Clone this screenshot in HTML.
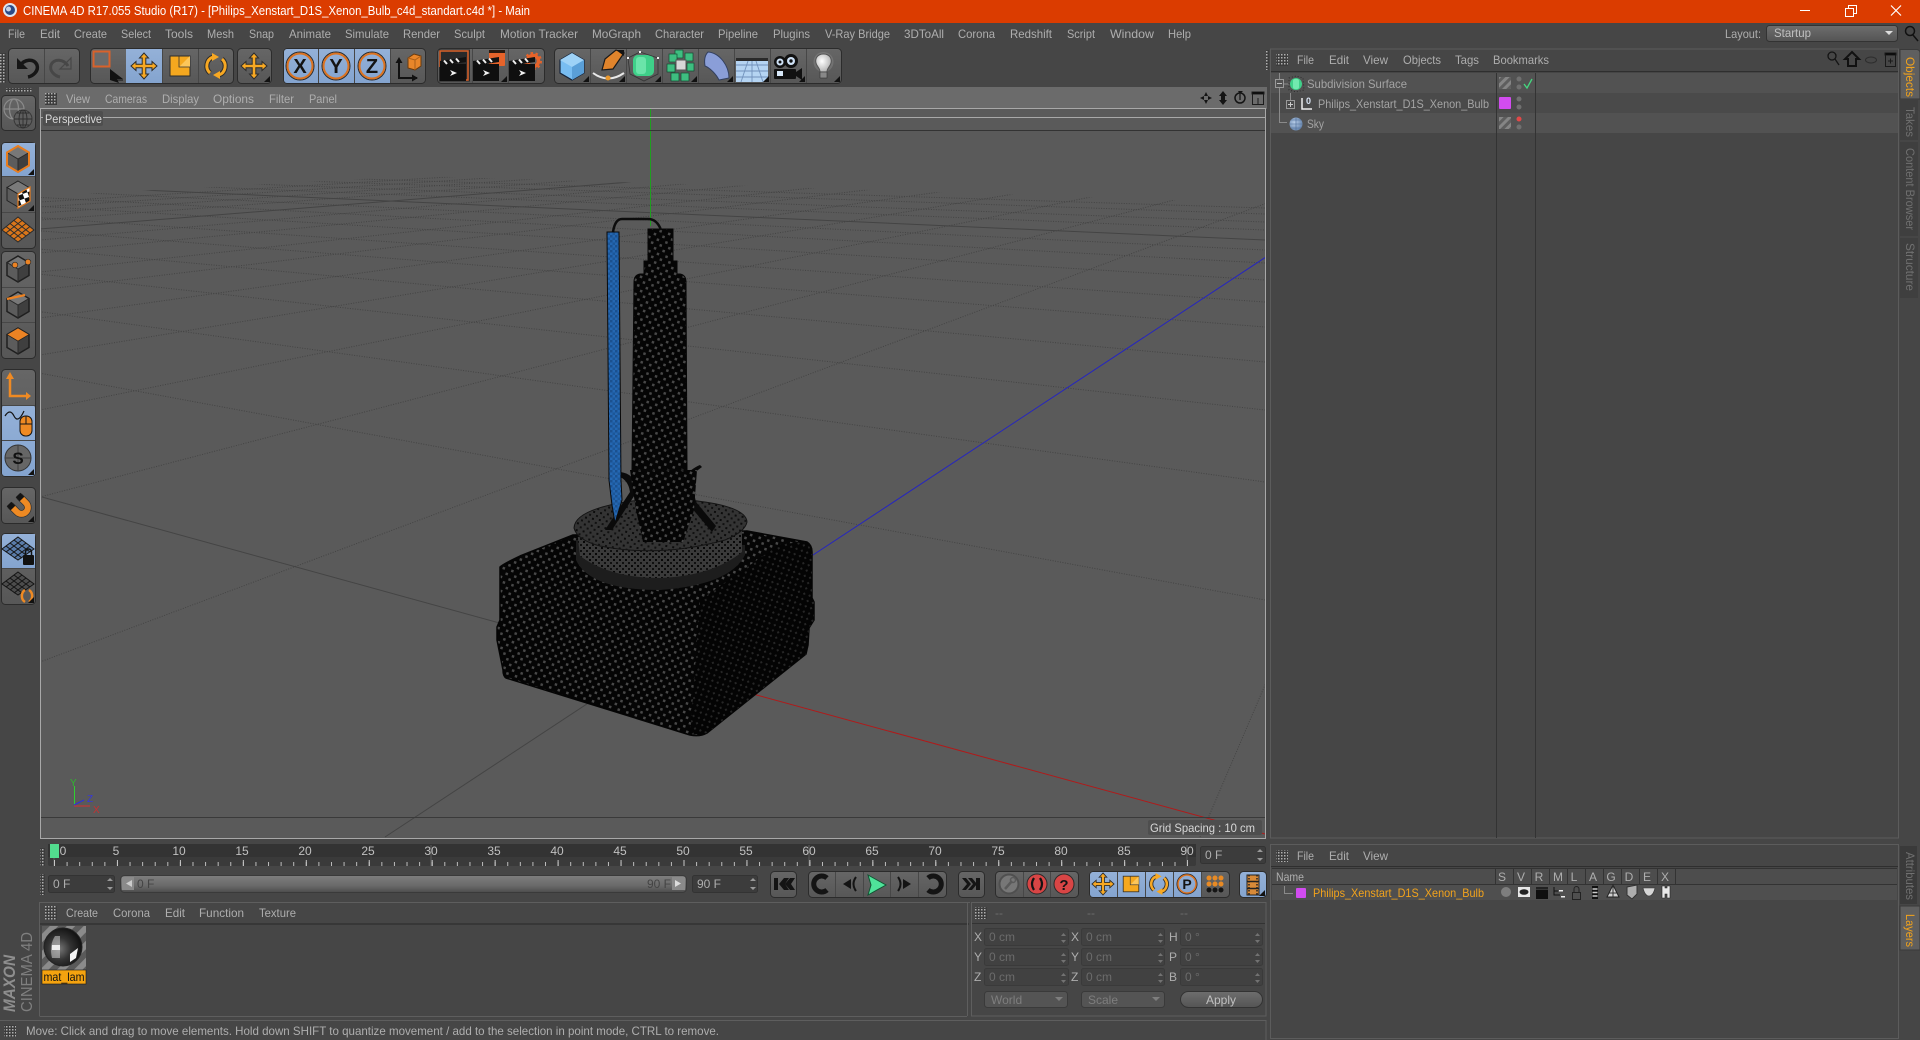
<!DOCTYPE html>
<html><head><meta charset="utf-8"><title>CINEMA 4D</title>
<style>
html,body{margin:0;padding:0;background:#464646;width:1920px;height:1040px;overflow:hidden}
svg{display:block}
text{font-family:"Liberation Sans",sans-serif;font-size:12px;fill:#aeaeae;white-space:pre}
.d,.d text{fill:#6c6c6c}.o{fill:#f2a31c}.w{fill:#d8d8d8}.h,.h text{fill:#c0c0c0}
</style></head><body>
<svg width="1920" height="1040" viewBox="0 0 1920 1040" xmlns="http://www.w3.org/2000/svg">
<defs>
<pattern id="grip" width="3" height="3" patternUnits="userSpaceOnUse"><rect width="3" height="3" fill="#3c3c3c"/><rect width="1.5" height="1.5" fill="#b0b0b0"/></pattern>
<linearGradient id="btn" x1="0" y1="0" x2="0" y2="1"><stop offset="0" stop-color="#666"/><stop offset="1" stop-color="#575757"/></linearGradient>
<linearGradient id="blu" x1="0" y1="0" x2="0" y2="1"><stop offset="0" stop-color="#94b1d8"/><stop offset="1" stop-color="#84a4cf"/></linearGradient>
<linearGradient id="sl" x1="0" y1="0" x2="0" y2="1"><stop offset="0" stop-color="#7e7e7e"/><stop offset=".6" stop-color="#6a6a6a"/><stop offset="1" stop-color="#4c4c4c"/></linearGradient>
<linearGradient id="dd" x1="0" y1="0" x2="0" y2="1"><stop offset="0" stop-color="#6e6e6e"/><stop offset="1" stop-color="#545454"/></linearGradient>
<pattern id="d1" width="9" height="9" patternUnits="userSpaceOnUse" patternTransform="rotate(18)"><rect width="9" height="9" fill="#050505"/><rect x="1" y="1" width="2.500" height="2.500" fill="#484848"/><rect x="5.500" y="5.500" width="2.500" height="2.500" fill="#484848"/></pattern>
<pattern id="d2" width="8" height="8" patternUnits="userSpaceOnUse" patternTransform="rotate(-25)"><rect width="8" height="8" fill="#040404"/><rect x="1" y="1" width="2" height="2" fill="#262626"/><rect x="5" y="5" width="2" height="2" fill="#262626"/></pattern>
<pattern id="d3" width="6" height="6" patternUnits="userSpaceOnUse"><rect width="6" height="6" fill="#3a3a3a"/><rect x="1" y="1" width="2" height="2" fill="#080808"/><rect x="4" y="4" width="2" height="2" fill="#101010"/></pattern>
<pattern id="d4" width="7" height="7" patternUnits="userSpaceOnUse" patternTransform="rotate(10)"><rect width="7" height="7" fill="#333"/><rect x="1" y="1" width="2" height="2" fill="#0c0c0c"/><rect x="4.500" y="4.500" width="2" height="2" fill="#111"/></pattern>
<pattern id="bl" width="5" height="5" patternUnits="userSpaceOnUse"><rect width="5" height="5" fill="#2467b2"/><rect width="2.500" height="2.500" fill="#1b5190"/><rect x="2.500" y="2.500" width="2.500" height="2.500" fill="#1d5798"/></pattern>
<pattern id="hat" width="6" height="6" patternUnits="userSpaceOnUse" patternTransform="rotate(-45)"><rect width="6" height="6" fill="#858585"/><rect width="6" height="3" fill="#5e5e5e"/></pattern>
<pattern id="chk" width="10" height="10" patternUnits="userSpaceOnUse" patternTransform="rotate(-20)"><rect width="10" height="10" fill="#fff"/><rect width="5" height="5" fill="#111"/><rect x="5" y="5" width="5" height="5" fill="#111"/></pattern>
<pattern id="stripe" width="12" height="12" patternUnits="userSpaceOnUse" patternTransform="rotate(45)"><rect width="12" height="12" fill="#8b8b8b"/><rect width="6" height="12" fill="#5a5a5a"/></pattern>
<radialGradient id="chrome" cx=".4" cy=".55" r=".6"><stop offset="0" stop-color="#777"/><stop offset=".5" stop-color="#333"/><stop offset="1" stop-color="#111"/></radialGradient>
<radialGradient id="sky" cx=".4" cy=".4" r=".7"><stop offset="0" stop-color="#b7cde8"/><stop offset="1" stop-color="#5e7da6"/></radialGradient>
<radialGradient id="glb" cx=".4" cy=".4" r=".7"><stop offset="0" stop-color="#ffffff"/><stop offset="1" stop-color="#a8a8a8"/></radialGradient>
<clipPath id="vp"><rect x="41" y="109" width="1224" height="729"/></clipPath>
<clipPath id="gr"><polygon points="41,196 230,186 418,176 750,186 1266,203 1266,838 41,838"/></clipPath>
<path id="mv" d="M0-13L4.500-8H1.800V-1.800H8V-4.500L13 0L8 4.500V1.800H1.800V8H4.500L0 13L-4.500 8H-1.800V1.800H-8V4.500L-13 0L-8-4.500V-1.800H-1.800V-8H-4.500Z" fill="#f7a823" stroke="#2c2c2c" stroke-width="1"/>
<g id="sc"><rect x="-10" y="-10" width="20" height="20" fill="#f5a81f" stroke="#2c2c2c"/><path d="M-1 1L10-10V1Z" fill="#fcc65a"/><path d="M-1-10V1H10" fill="none" stroke="#333" stroke-width=".8"/></g>
<g id="rt"><path d="M-3-9A9.500 9.500 0 0 0-6 7" fill="none" stroke="#2c2c2c" stroke-width="5"/><path d="M3 9A9.500 9.500 0 0 0 6-7" fill="none" stroke="#2c2c2c" stroke-width="5"/><path d="M-3-9A9.500 9.500 0 0 0-6 7" fill="none" stroke="#f7a823" stroke-width="3"/><path d="M3 9A9.500 9.500 0 0 0 6-7" fill="none" stroke="#f7a823" stroke-width="3"/><path d="M-4-13L3-9L-4-5Z" fill="#f7a823"/><path d="M4 13L-3 9L4 5Z" fill="#f7a823"/></g>
<g id="cb"><polygon points="0,-13 11,-6.500 0,0 -11,-6.500" fill="#787878"/><polygon points="-11,-6.500 0,0 0,13 -11,6.500" fill="#5c5c5c"/><polygon points="11,-6.500 0,0 0,13 11,6.500" fill="#3f3f3f"/><polygon points="0,-13 11,-6.500 11,6.500 0,13 -11,6.500 -11,-6.500" fill="none" stroke="#1f1f1f" stroke-width="1.500"/><path d="M-11-6.500L0 0L11-6.500M0 0V13" fill="none" stroke="#2a2a2a"/></g>
<path id="tr" d="M0 0L-6 0L0-6Z" fill="#111"/>
<g id="cl"><rect x="-13" y="-6" width="26" height="17" fill="#0f0f0f"/><path d="M-13-9L13-13V-8L-13-4Z" fill="#111"/><path d="M-9-9.500L-6-6M-3-10.500L0-7M3-11.500L6-8" stroke="#eee" stroke-width="2"/><path d="M-3 0L4 3L-3 6L-1 3Z" fill="#f2f2f2"/></g>
</defs>

<!-- base -->
<rect width="1920" height="1040" fill="#464646"/>
<!-- title bar -->
<rect width="1920" height="23" fill="#db3c00"/>
<circle cx="10" cy="10" r="7" fill="#dfe6f0"/><circle cx="10" cy="10" r="5" fill="#2c4a86"/><circle cx="8.500" cy="9" r="2.500" fill="#c8d2e4"/>
<text x="23" y="15" style="font-size:12.500px;fill:#fff" textLength="507" lengthAdjust="spacingAndGlyphs">CINEMA 4D R17.055 Studio (R17) - [Philips_Xenstart_D1S_Xenon_Bulb_c4d_standart.c4d *] - Main</text>
<path d="M1800 10.500H1810" stroke="#fff" stroke-width="1"/>
<rect x="1845.500" y="8.500" width="8" height="8" fill="none" stroke="#fff"/><path d="M1848.500 8V5.500H1856.500V13.500H1854" fill="none" stroke="#fff"/>
<path d="M1891 5.500L1901 15.500M1901 5.500L1891 15.500" stroke="#fff" stroke-width="1.200"/>

<!-- menu -->
<g>
<text x="8" y="38" textLength="17" lengthAdjust="spacingAndGlyphs">File</text><text x="40" y="38" textLength="20" lengthAdjust="spacingAndGlyphs">Edit</text><text x="74" y="38" textLength="33" lengthAdjust="spacingAndGlyphs">Create</text><text x="121" y="38" textLength="30" lengthAdjust="spacingAndGlyphs">Select</text><text x="165" y="38" textLength="28" lengthAdjust="spacingAndGlyphs">Tools</text><text x="207" y="38" textLength="27" lengthAdjust="spacingAndGlyphs">Mesh</text><text x="249" y="38" textLength="25" lengthAdjust="spacingAndGlyphs">Snap</text><text x="289" y="38" textLength="42" lengthAdjust="spacingAndGlyphs">Animate</text><text x="345" y="38" textLength="44" lengthAdjust="spacingAndGlyphs">Simulate</text><text x="403" y="38" textLength="37" lengthAdjust="spacingAndGlyphs">Render</text><text x="454" y="38" textLength="31" lengthAdjust="spacingAndGlyphs">Sculpt</text><text x="500" y="38" textLength="78" lengthAdjust="spacingAndGlyphs">Motion Tracker</text><text x="592" y="38" textLength="49" lengthAdjust="spacingAndGlyphs">MoGraph</text><text x="655" y="38" textLength="49" lengthAdjust="spacingAndGlyphs">Character</text><text x="718" y="38" textLength="40" lengthAdjust="spacingAndGlyphs">Pipeline</text><text x="773" y="38" textLength="37" lengthAdjust="spacingAndGlyphs">Plugins</text><text x="825" y="38" textLength="65" lengthAdjust="spacingAndGlyphs">V-Ray Bridge</text><text x="904" y="38" textLength="40" lengthAdjust="spacingAndGlyphs">3DToAll</text><text x="958" y="38" textLength="37" lengthAdjust="spacingAndGlyphs">Corona</text><text x="1010" y="38" textLength="42" lengthAdjust="spacingAndGlyphs">Redshift</text><text x="1067" y="38" textLength="28" lengthAdjust="spacingAndGlyphs">Script</text><text x="1110" y="38" textLength="44" lengthAdjust="spacingAndGlyphs">Window</text><text x="1168" y="38" textLength="23" lengthAdjust="spacingAndGlyphs">Help</text>
<text x="1725" y="38" textLength="36" lengthAdjust="spacingAndGlyphs">Layout:</text>
</g>
<rect x="1766.500" y="25.500" width="131" height="16" rx="3" fill="url(#dd)" stroke="#333"/>
<text x="1774" y="37" class="h" textLength="37" lengthAdjust="spacingAndGlyphs">Startup</text><path d="M1885 31H1893L1889 35Z" fill="#ddd"/>
<g fill="none" stroke="#111" stroke-width="1.500"><circle cx="1910" cy="31" r="4.500"/><path d="M1913 35L1918 41"/></g>

<!-- top toolbar -->
<rect x="0" y="53" width="6" height="30" fill="url(#grip)"/>
<g stroke="#2c2c2c">
<rect x="8.500" y="48.500" width="71" height="35" rx="4" fill="url(#btn)"/>
<rect x="90.500" y="48.500" width="143" height="35" rx="4" fill="url(#btn)"/>
<rect x="126" y="49" width="36" height="34" fill="url(#blu)" stroke="none"/>
<rect x="237.500" y="48.500" width="34" height="35" rx="4" fill="url(#btn)"/>
<rect x="283.500" y="48.500" width="142" height="35" rx="4" fill="url(#btn)"/>
<path d="M284 52a3 3 0 0 1 3-3H390V83H287a3 3 0 0 1-3-3Z" fill="url(#blu)" stroke="none"/>
<rect x="437.500" y="48.500" width="107" height="35" rx="4" fill="url(#btn)"/>
<rect x="554.500" y="48.500" width="287" height="35" rx="4" fill="url(#btn)"/>
</g>
<path d="M44.500 49V83M162.500 49V83M198.500 49V83M318.500 49V83M354.500 49V83M390.500 49V83M472.500 49V83M508.500 49V83M590.500 49V83M626.500 49V83M662.500 49V83M698.500 49V83M734.500 49V83M770.500 49V83M806.500 49V83" stroke="#474747"/>
<!-- undo/redo -->
<path d="M17 58V69H28Z" fill="#161616"/><path d="M20 66C24 59 34 58 37 65C39 71 33 76 28 77" fill="none" stroke="#161616" stroke-width="3.500"/>
<path d="M71 58V69H60Z" fill="none" stroke="#474747" stroke-width="1.200"/><path d="M68 66C64 59 54 58 51 65C49 71 55 76 60 77" fill="none" stroke="#474747" stroke-width="3"/>
<!-- select -->
<rect x="93.500" y="51.500" width="16" height="15" fill="#6b6b6b" stroke="#d9622b" stroke-width="2"/>
<path d="M110 69L123 79L117 79L119 83L110 80Z" fill="#111"/>
<path d="M117 80L123 80" stroke="#111"/>
<use href="#mv" x="144" y="66"/><use href="#sc" x="180" y="66"/><use href="#rt" x="216" y="66"/>
<use href="#mv" x="254" y="66"/><use href="#tr" x="270" y="82"/>
<!-- XYZ -->
<g fill="none"><circle cx="300" cy="66" r="14" stroke="#2a2a2a" stroke-width="1"/><circle cx="300" cy="66" r="12.500" stroke="#dd7320" stroke-width="2"/><circle cx="336" cy="66" r="14" stroke="#2a2a2a" stroke-width="1"/><circle cx="336" cy="66" r="12.500" stroke="#dd7320" stroke-width="2"/><circle cx="372" cy="66" r="14" stroke="#2a2a2a" stroke-width="1"/><circle cx="372" cy="66" r="12.500" stroke="#dd7320" stroke-width="2"/></g>
<text x="300" y="73" text-anchor="middle" style="font-size:20px;font-weight:bold;fill:#141414">X</text>
<text x="336" y="73" text-anchor="middle" style="font-size:20px;font-weight:bold;fill:#141414">Y</text>
<text x="372" y="73" text-anchor="middle" style="font-size:20px;font-weight:bold;fill:#141414">Z</text>
<path d="M399 62V78H417" fill="none" stroke="#111" stroke-width="2"/><path d="M399 57L395.500 63H402.500ZM418 78L412 74.500V81.500Z" fill="#111"/>
<polygon points="408,58 414,54 421,56 421,66 415,70 408,68" fill="#e9862a" stroke="#6b3a0c"/><path d="M408 58L415 60L421 56M415 60V70" stroke="#ab5f18" fill="none"/>
<!-- render -->
<rect x="439" y="49.500" width="31" height="32" fill="#2a2a2a"/>
<path d="M440 67V51H468V80H462" fill="none" stroke="#d9622b" stroke-width="1.500"/>
<use href="#cl" x="453" y="70"/>
<rect x="489" y="50" width="16" height="16" rx="1" fill="#e6632a"/><path d="M489 50H505V53H489Z" fill="#2a1a10"/><use href="#cl" x="486" y="70"/><use href="#tr" x="507" y="82"/>
<circle cx="533" cy="61" r="5.500" fill="none" stroke="#e6632a" stroke-width="3.500"/><circle cx="533" cy="61" r="8" fill="none" stroke="#e6632a" stroke-width="2" stroke-dasharray="2.500 2.500"/><use href="#cl" x="522" y="70"/>
<!-- objects -->
<polygon points="572,53 584,60 584,73 572,80 560,73 560,60" fill="#78bdf2" stroke="#16243a" stroke-width="1.200"/><polygon points="572,53 584,60 572,67 560,60" fill="#9ed2f7"/><polygon points="572,67 584,60 584,73 572,80" fill="#5a9fd8"/><use href="#tr" x="589" y="82"/>
<path d="M616 50L624 53L613 69L602 70L605 59Z" fill="#e0842c" stroke="#1a1a1a" stroke-width="1.200"/><path d="M616 50L624 50L624 56Z" fill="#141414"/><path d="M593 73Q608 84 624 73" fill="none" stroke="#e8e8e8" stroke-width="2"/><circle cx="608" cy="78" r="2.500" fill="#e8972c"/><use href="#tr" x="625" y="82"/>
<rect x="633" y="55" width="21" height="21" rx="5" fill="#3fd089"/><rect x="636" y="57" width="10" height="17" rx="3" fill="#6ae4a9"/><path d="M628 58L640 52L658 58V74L644 81L630 74Z" fill="none" stroke="#333" stroke-width=".8"/><rect x="627" y="57" width="2" height="2" fill="#eee"/><rect x="639" y="51" width="2" height="2" fill="#eee"/><rect x="657" y="57" width="2" height="2" fill="#eee"/><use href="#tr" x="661" y="82"/>
<g fill="#3ebe80" stroke="#14492f" stroke-width=".7"><rect x="675" y="50" width="8" height="8"/><rect x="685" y="53" width="8" height="8"/><rect x="669" y="54" width="8" height="8"/><rect x="667" y="64" width="8" height="8"/><rect x="687" y="63" width="7" height="8"/><rect x="671" y="73" width="8" height="8"/><rect x="681" y="73" width="8" height="8"/></g><rect x="676" y="60" width="10" height="10" fill="#d7d7d7" stroke="#555"/><use href="#tr" x="697" y="82"/>
<path d="M708 52C720 53 729 66 729 78L719 80C716 74 710 68 705 66C704 60 705 55 708 52Z" fill="#8a9ed8" stroke="#33405f"/><use href="#tr" x="733" y="82"/>
<rect x="736" y="58" width="32" height="24" fill="#b5d4f2"/><rect x="736" y="58" width="32" height="3" fill="#2a2a2a"/><path d="M736 65H768M736 71H768M736 77H768M748 61L741 82M756 61L763 82M752 61V82" stroke="#7191bb" stroke-width=".9"/><use href="#tr" x="769" y="82"/>
<circle cx="780" cy="62" r="6" fill="#111"/><circle cx="780" cy="62" r="3.500" fill="#cfe2f6"/><circle cx="780" cy="62" r="1.500" fill="#111"/><circle cx="791" cy="61" r="7" fill="#111"/><circle cx="791" cy="61" r="4" fill="#cfe2f6"/><circle cx="791" cy="61" r="1.700" fill="#111"/><rect x="774" y="69" width="22" height="10" rx="1" fill="#111"/><rect x="777" y="71" width="6" height="5" fill="#d8e8f8"/><path d="M796 72L802 68V80L796 76Z" fill="#111"/><use href="#tr" x="805" y="82"/>
<circle cx="823.500" cy="62" r="10" fill="#fff" opacity=".12"/><path d="M823.500 54C817 54 815 59 816 63C817 67 820 68 820 72H827C827 68 830 67 831 63C832 59 830 54 823.500 54Z" fill="url(#glb)" stroke="#555"/><rect x="820" y="72" width="7" height="6" fill="#888" stroke="#333" stroke-width=".6"/><use href="#tr" x="840" y="82"/>

<!-- left toolbar -->
<rect x="6" y="88" width="26" height="4" fill="url(#grip)"/>
<rect x="1.500" y="95.500" width="34" height="35" rx="4" fill="url(#btn)" stroke="#2c2c2c"/>
<g fill="none" stroke="#8a8a8a" stroke-width="1.200"><circle cx="14" cy="109" r="10"/><ellipse cx="14" cy="109" rx="4.500" ry="10"/><path d="M4 109H24"/></g>
<g fill="#5e5e5e" stroke="#383838"><circle cx="23" cy="119" r="9"/></g><path d="M23 110V128M14 119H32M17 113H29M17 125H29" stroke="#2e2e2e" stroke-width=".9"/><ellipse cx="23" cy="119" rx="4" ry="9" fill="none" stroke="#2e2e2e" stroke-width=".9"/>
<g stroke="#2c2c2c">
<rect x="1.500" y="142.500" width="34" height="106" rx="4" fill="url(#btn)"/>
<path d="M2 146a3 3 0 0 1 3-3H35V176H2Z" fill="url(#blu)" stroke="none"/>
<rect x="1.500" y="251.500" width="34" height="107" rx="4" fill="url(#btn)"/>
<rect x="1.500" y="369.500" width="34" height="107" rx="4" fill="url(#btn)"/>
<rect x="2" y="405" width="33" height="71" rx="3" fill="url(#blu)" stroke="none"/>
<rect x="1.500" y="487.500" width="34" height="36" rx="4" fill="url(#btn)"/>
<rect x="1.500" y="533.500" width="34" height="71" rx="4" fill="url(#btn)"/>
<path d="M2 537a3 3 0 0 1 3-3H35V568H2Z" fill="url(#blu)" stroke="none"/>
</g>
<path d="M2 176.500H35M2 212.500H35M2 287.500H35M2 322.500H35M2 405.500H35M2 440.500H35M2 568.500H35" stroke="#474747"/>
<!-- cube 1 -->
<use href="#cb" x="18" y="159"/><polygon points="18,146 29,152.500 29,165.500 18,172 7,165.500 7,152.500" fill="none" stroke="#e97d1e" stroke-width="2"/>
<use href="#tr" x="34" y="175"/>
<!-- checker cube -->
<polygon points="18,181 29,187.500 18,194 7,187.500" fill="#7a7a7a" stroke="#222"/><polygon points="7,187.500 18,194 18,207 7,200.500" fill="#5c5c5c" stroke="#222"/><polygon points="18,194 30,187 30,201 18,208" fill="url(#chk)" stroke="#e97d1e" stroke-width="1.200"/><use href="#tr" x="34" y="211"/>
<!-- plane grid -->
<polygon points="18,217 34,230 18,242 2,230" fill="#d9761b" stroke="#2a2a2a"/><path d="M10 223.500L26 236M14 220.500L30 233M6 226.500L22 239M26 223.500L10 236M22 220.500L6 233M30 226.500L14 239" stroke="#2c2c2c" stroke-width="1"/>
<!-- points/edges/poly -->
<use href="#cb" x="18" y="269"/><circle cx="15" cy="265" r="2.800" fill="#ec8324" stroke="#222" stroke-width=".6"/><circle cx="28" cy="262" r="2.800" fill="#ec8324" stroke="#222" stroke-width=".6"/>
<use href="#cb" x="18" y="305"/><path d="M7 299L25 295" stroke="#ec8324" stroke-width="2.200"/>
<use href="#cb" x="18" y="341"/><polygon points="18,328 29,334.500 18,341 7,334.500" fill="#ec8324" stroke="#222" stroke-width=".6"/>
<!-- axis -->
<path d="M10 378V396H29" fill="none" stroke="#ef8a23" stroke-width="2.500"/><path d="M10 372L6 379H14ZM31 396L26 392V400Z" fill="#ef8a23"/>
<!-- mouse -->
<path d="M5 416Q10 408 14 416T24 411" fill="none" stroke="#141414" stroke-width="1.200"/><rect x="20" y="416" width="12" height="20" rx="5.500" fill="#ef8a23" stroke="#141414"/><path d="M20 424H32M26 416V424" stroke="#141414"/>
<!-- S -->
<circle cx="18" cy="458" r="13" fill="#666" stroke="#333"/><path d="M5 458H31M18 445V471" stroke="#3f3f3f"/><text x="18" y="464" text-anchor="middle" style="font-size:17px;font-weight:bold;fill:#111">S</text><use href="#tr" x="34" y="475"/>
<!-- magnet -->
<path d="M19 496L26 503A6 6 0 0 1 17 512L10 505" fill="none" stroke="#333" stroke-width="7.500"/>
<path d="M19 496L26 503A6 6 0 0 1 17 512L10 505" fill="none" stroke="#ef8a23" stroke-width="6"/>
<path d="M18 495L22 499M9 504L13 508" fill="none" stroke="#141414" stroke-width="6.500"/>
<use href="#tr" x="34" y="522"/>
<!-- snap -->
<polygon points="18,537 34,549 18,560 2,549" fill="#5a7ba8" stroke="#141414"/><path d="M10 543L26 555M14 540L30 552M6 546L22 558M26 543L10 555M22 540L6 552M30 546L14 558" stroke="#141414"/>
<rect x="23" y="555" width="11" height="10" rx="1" fill="#111"/><path d="M25.500 555V552A3 3 0 0 1 31.500 552V555" fill="none" stroke="#111" stroke-width="1.500"/>
<polygon points="18,572 34,584 18,595 2,584" fill="#4c4c4c" stroke="#141414"/><path d="M10 578L26 590M14 575L30 587M6 581L22 593M26 578L10 590M22 575L6 587M30 581L14 593" stroke="#141414"/>
<g fill="none" stroke="#ef8a23" stroke-width="2.500"><path d="M25 590A6.500 7 0 0 0 25 602"/><path d="M29 590A6.500 7 0 0 1 29 602"/></g><use href="#tr" x="34" y="603"/>

<!-- viewport -->
<rect x="39" y="87" width="1228" height="22" fill="#6b6b6b"/>
<rect x="45" y="93" width="12" height="12" fill="url(#grip)"/>
<g>
<text x="66" y="103" textLength="24" lengthAdjust="spacingAndGlyphs">View</text><text x="105" y="103" textLength="42" lengthAdjust="spacingAndGlyphs">Cameras</text><text x="162" y="103" textLength="37" lengthAdjust="spacingAndGlyphs">Display</text><text x="213" y="103" textLength="41" lengthAdjust="spacingAndGlyphs">Options</text><text x="269" y="103" textLength="25" lengthAdjust="spacingAndGlyphs">Filter</text><text x="309" y="103" textLength="28" lengthAdjust="spacingAndGlyphs">Panel</text>
</g>
<path d="M1206 92L1208 96H1204ZM1206 104L1204 100H1208ZM1200 98L1204 96V100ZM1212 98L1208 100V96Z" fill="#141414"/>
<path d="M1223 91L1227 96H1225V100H1227L1223 105L1219 100H1221V96H1219Z" fill="#141414"/>
<circle cx="1240" cy="98" r="5" fill="none" stroke="#141414" stroke-width="1.500"/><path d="M1240 94V100" stroke="#141414" stroke-width="1.200"/><path d="M1238 91H1243L1240 94Z" fill="#141414"/>
<rect x="1252.500" y="92.500" width="11" height="12" fill="none" stroke="#1c1c1c" stroke-width="1"/><path d="M1252 92H1264V94H1252ZM1258 98V104" stroke="#1c1c1c"/>
<rect x="40" y="108" width="1226" height="731" fill="#5a5a5a"/>
<g clip-path="url(#vp)">
 <g clip-path="url(#gr)" stroke="#444" stroke-width="1" stroke-dasharray="1 1.500" fill="none">
  <!-- family A -->
  <path d="M40 662L1510 112M40 497L1510 112M40 410L1510 112M40 355L1510 112M40 318L1510 112M40 290L1510 112M40 272L1510 112M40 253L1510 112M40 240L1510 112M40 220L1510 112M40 213L1510 112M40 207L1510 112M40 202L1510 112"/>
  <path d="M1200 837L1510 112"/>
  <!-- family B -->
  <path d="M-1295 126L1265 600M-1295 126L1265 482M-1295 126L1265 410M-1295 126L1265 362M-1295 126L1265 327M-1295 126L1265 302M-1295 126L1265 280M-1295 126L1265 263M-1295 126L1265 250M-1295 126L1265 230M-1295 126L1265 222M-1295 126L1265 214M-1295 126L1265 208"/>
 </g>
 <g clip-path="url(#gr)" stroke="#444" stroke-width="1" fill="none">
  <path d="M40 229L1510 112M-1295 126L1265 240"/>
  <path d="M42 497L750 692"/>
  <path d="M385 837L813 555"/>
 </g>
 <path d="M650.500 109V226" stroke="#1f9f1f"/>
 <path d="M813 555L1266 257" stroke="#2525c0"/>
 <path d="M753 694L1265 834" stroke="#b01a1a"/>
 <path d="M41 130.500H1265" stroke="#333"/>
 <path d="M41 817.500H1265" stroke="#3a3a3a"/>
 <path d="M41 117.500H1265" stroke="#a8a8a8"/>
</g>
<path d="M40.500 108V838.500H1265.500V108M40 108.500H1266" fill="none" stroke="#a8a8a8"/>
<rect x="43" y="111" width="60" height="15" rx="2" fill="#4e4e4e"/>
<text x="45" y="123" class="w" textLength="57" lengthAdjust="spacingAndGlyphs">Perspective</text>
<rect x="1148" y="820" width="114" height="15" rx="2" fill="#4e4e4e"/>
<text x="1150" y="832" class="w" textLength="105" lengthAdjust="spacingAndGlyphs">Grid Spacing : 10 cm</text>
<!-- axis gizmo -->
<path d="M74.500 786V805" stroke="#2fd02f"/><path d="M74 805L84 800" stroke="#2e2ee0"/><path d="M74 806H90" stroke="#d83030"/>
<text x="70" y="786" style="font-size:10px;fill:#2fb52f">Y</text><text x="87" y="802" style="font-size:10px;fill:#3838d8">Z</text><text x="93" y="813" style="font-size:10px;fill:#c83030">X</text>

<!-- bulb -->
<path d="M500 567Q503 564 520 556L573 535L747 531L807 542Q812 545 812 552L812 598L814 602L814 620L809 628L808 645L806 654L707 733Q700 737 690 735L506 678Q503 676 503 670L499 650L497 640L497 627L500 620Z" fill="url(#d1)" stroke="#050505" stroke-width="1.500" stroke-linejoin="round"/>
<path d="M690 735L707 733L806 654L808 645L809 628L814 620L814 602L812 598L812 552L807 542L780 544L700 600Z" fill="url(#d2)"/>
<path d="M576 560Q590 590 660 590Q730 585 745 555L745 545L576 540Z" fill="#1d1d1d"/>
<path d="M577 530L580 556Q610 578 660 578Q712 576 742 552L742 525Z" fill="url(#d3)"/>
<path d="M574 528Q575 505 660 498Q746 502 747 522Q745 532 725 540Q660 558 600 546Q577 540 574 528Z" fill="url(#d4)" stroke="#141414"/>
<path d="M618 472Q634 472 638 490L612 530L605 530L630 492Q628 478 616 476ZM702 467L690 476L696 502L716 526L712 532L690 506L680 480Q692 468 700 465Z" fill="#0a0a0a"/>
<path d="M630 470H697L694 510L683 542H643L636 510Z" fill="url(#d1)"/>
<path d="M634 282Q634 275 640 274H644V261H648V229H673V261H677V274H680Q686 275 686 282L687 470H632Z" fill="url(#d1)" stroke="#060606"/>
<path d="M613 232Q615 219 622 219H648Q657 219 661 230" fill="none" stroke="#0c0c0c" stroke-width="2.500"/>
<path d="M607 232H619L621 480L622 500L615 523L612 505L609 480Z" fill="url(#bl)" stroke="#0a0a0a" stroke-width="1"/>

<!-- timeline -->
<rect x="40" y="848" width="5" height="18" fill="url(#grip)"/>
<rect x="48" y="844" width="1148" height="22" rx="2" fill="#3a3a3a"/><rect x="48" y="844" width="1148" height="13" fill="#333"/>
<path d="M54 866V845M431 866V845M809 866V845M1187 866V845" stroke="#5e5e5e"/>
<line x1="54" y1="864" x2="1188" y2="864" stroke="#bdbdbd" stroke-width="4" stroke-dasharray="1 11.590"/>
<line x1="54" y1="863" x2="1188" y2="863" stroke="#c8c8c8" stroke-width="6" stroke-dasharray="1 61.950"/>
<rect x="50" y="844" width="9" height="14" fill="#52dc8e"/>
<g class="h" text-anchor="middle">
<text x="63" y="855">0</text><text x="116" y="855">5</text><text x="179" y="855">10</text><text x="242" y="855">15</text><text x="305" y="855">20</text><text x="368" y="855">25</text><text x="431" y="855">30</text><text x="494" y="855">35</text><text x="557" y="855">40</text><text x="620" y="855">45</text><text x="683" y="855">50</text><text x="746" y="855">55</text><text x="809" y="855">60</text><text x="872" y="855">65</text><text x="935" y="855">70</text><text x="998" y="855">75</text><text x="1061" y="855">80</text><text x="1124" y="855">85</text><text x="1187" y="855">90</text>
</g>
<rect x="1200.500" y="846.500" width="65" height="17" rx="2" fill="#3c3c3c" stroke="#333"/>
<text x="1205" y="859">0 F</text><path d="M1258 852L1261 849L1264 852ZM1258 858H1264L1261 861Z" fill="#999" transform="translate(-1,0)"/>
<rect x="40" y="874" width="5" height="21" fill="url(#grip)"/>
<rect x="48.500" y="875.500" width="66" height="17" rx="2" fill="#3c3c3c" stroke="#333"/>
<text x="53" y="888">0 F</text><path d="M107 881L110 878L113 881ZM107 887H113L110 890Z" fill="#999"/>
<rect x="120.500" y="875.500" width="566" height="17" rx="4" fill="url(#sl)" stroke="#3a3a3a"/>
<rect x="122" y="877" width="12" height="13" fill="#8a8a8a"/><path d="M132 880L126 883.500L132 887Z" fill="#ccc"/>
<text x="137" y="888" style="fill:#444">0 F</text>
<rect x="672" y="877" width="13" height="13" fill="#8a8a8a"/><path d="M675 880L681 883.500L675 887Z" fill="#ddd"/>
<text x="647" y="888" style="fill:#444">90 F</text>
<rect x="692.500" y="875.500" width="65" height="17" rx="2" fill="#3c3c3c" stroke="#333"/>
<text x="697" y="888">90 F</text><path d="M750 881L753 878L756 881ZM750 887H756L753 890Z" fill="#999"/>
<!-- playback -->
<g stroke="#2c2c2c">
<rect x="770.500" y="871.500" width="26" height="26" rx="4" fill="url(#btn)"/>
<rect x="808.500" y="871.500" width="138" height="26" rx="4" fill="url(#btn)"/>
<rect x="958.500" y="871.500" width="26" height="26" rx="4" fill="url(#btn)"/>
<rect x="995.500" y="871.500" width="83" height="26" rx="4" fill="url(#btn)"/>
<rect x="1089.500" y="871.500" width="140" height="26" rx="4" fill="url(#btn)"/>
<path d="M1090 875a3 3 0 0 1 3-3H1201V897H1093a3 3 0 0 1-3-3Z" fill="url(#blu)" stroke="none"/>
<rect x="1239.500" y="871.500" width="27" height="26" rx="4" fill="url(#blu)"/>
</g>
<path d="M835.500 872V897M863.500 872V897M890.500 872V897M918.500 872V897M1023.500 872V897M1050.500 872V897M1117.500 872V897M1145.500 872V897M1173.500 872V897M1201.500 872V897" stroke="#474747"/>
<path d="M775 878H779V890H775ZM790 878L786 884L790 890H785L780 884L785 878ZM796 878L792 884L796 890H791L786 884L791 878Z" fill="#141414" transform="translate(-1,0)"/>
<path d="M827 878A8 8 0 1 0 827 890" fill="none" stroke="#141414" stroke-width="5"/>
<path d="M851 879L843 884L851 889Z" fill="#141414"/>
<path d="M856 877Q851 884 856 891" fill="none" stroke="#141414" stroke-width="2"/>
<path d="M868 875L886 885L868 895L871 885Z" fill="#4fe39a" stroke="#153"/>
<path d="M903 879L911 884L903 889Z" fill="#141414"/><path d="M898 877Q903 884 898 891" fill="none" stroke="#141414" stroke-width="2"/>
<path d="M928 878A8 8 0 1 1 928 890" fill="none" stroke="#141414" stroke-width="5"/>
<path d="M964 878L969 884L964 890H968L973 884L968 878ZM970 878L975 884L970 890H974L979 884L974 878Z" fill="#141414" transform="translate(-2,0)"/><rect x="976" y="878" width="4" height="12" fill="#141414"/>
<circle cx="1009" cy="884" r="9.500" fill="#777" stroke="#4f4f4f" stroke-width="2"/><path d="M1005 889L1012 881" stroke="#5a5a5a" stroke-width="2.500"/><circle cx="1013" cy="880" r="2.500" fill="none" stroke="#5a5a5a" stroke-width="1.500"/>
<circle cx="1037" cy="884" r="10" fill="#d84545" stroke="#2a2a2a"/><path d="M1034 878Q1030 884 1034 890M1040 878Q1044 884 1040 890" fill="none" stroke="#141414" stroke-width="2.200"/>
<circle cx="1064" cy="884" r="10" fill="#d84545" stroke="#2a2a2a"/><text x="1064" y="890" text-anchor="middle" style="font-size:15px;font-weight:bold;fill:#141414">?</text>
<use href="#mv" transform="translate(1103,884) scale(.85)"/>
<use href="#sc" transform="translate(1131,884) scale(.78)"/>
<use href="#rt" transform="translate(1159,884) scale(.85)"/>
<circle cx="1187" cy="884" r="10" fill="none" stroke="#2a2a2a"/><circle cx="1187" cy="884" r="9" fill="none" stroke="#dd7320" stroke-width="1.500"/><text x="1187" y="889" text-anchor="middle" style="font-size:14px;font-weight:bold;fill:#141414">P</text>
<g fill="#151515"><circle cx="1209" cy="890" r="2.500"/><circle cx="1215" cy="890" r="2.500"/><circle cx="1221" cy="890" r="2.500"/></g><g fill="#e88a24"><circle cx="1209" cy="884" r="2.500"/><circle cx="1215" cy="884" r="2.500"/><circle cx="1221" cy="884" r="2.500"/><circle cx="1209" cy="878" r="2.500"/><circle cx="1215" cy="878" r="2.500"/><circle cx="1221" cy="878" r="2.500"/></g>
<rect x="1247" y="875" width="12" height="20" fill="#d88a38" stroke="#222"/><path d="M1247 881.500H1259M1247 888.500H1259" stroke="#222" stroke-width="1.500"/><path d="M1249 875V895M1257 875V895" stroke="#222" stroke-dasharray="1.500 1.500" stroke-width="1.500"/><use href="#tr" x="1265" y="896"/>

<!-- material panel -->
<path d="M39.500 1016.500V902.500H970" fill="none" stroke="#5e5e5e"/>
<path d="M40 923.500H969M40 924.500H969" stroke="#333" stroke-width=".7"/>
<path d="M40 1016.500H967M967.500 902V1016" stroke="#5e5e5e" fill="none"/>
<rect x="45" y="906" width="12" height="14" fill="url(#grip)"/>
<text x="66" y="917" textLength="32" lengthAdjust="spacingAndGlyphs">Create</text><text x="113" y="917" textLength="37" lengthAdjust="spacingAndGlyphs">Corona</text><text x="165" y="917" textLength="20" lengthAdjust="spacingAndGlyphs">Edit</text><text x="199" y="917" textLength="45" lengthAdjust="spacingAndGlyphs">Function</text><text x="259" y="917" textLength="37" lengthAdjust="spacingAndGlyphs">Texture</text>
<rect x="42" y="926" width="44" height="57" fill="url(#stripe)"/>
<circle cx="63" cy="947" r="19" fill="url(#chrome)" stroke="#222"/><path d="M55 936H60V958H52C50 950 51 942 55 936Z" fill="#cfcfcf" opacity=".55"/><path d="M70 954L78 948L76 958L70 962Z" fill="#f4f4f4"/><path d="M52 945H60V950H52Z" fill="#eee"/>
<rect x="42" y="970" width="44" height="14" fill="#f5a30f" stroke="#1a1a1a" stroke-width=".6"/>
<text x="64" y="981" text-anchor="middle" style="fill:#111" textLength="41" lengthAdjust="spacingAndGlyphs">mat_lam</text>
<!-- logo -->
<text transform="translate(15,1012) rotate(-90)" textLength="57" lengthAdjust="spacingAndGlyphs" style="font-size:17px;font-weight:bold;font-style:italic;fill:#8e8e8e">MAXON</text>
<text transform="translate(32,1012) rotate(-90)" textLength="80" lengthAdjust="spacingAndGlyphs" style="font-size:16px;fill:#7f7f7f">CINEMA 4D</text>
<!-- coords -->
<path d="M971.500 1016V902.500H1266V1016H971" fill="none" stroke="#5e5e5e"/><path d="M972 923.500H1265" stroke="#333"/>
<rect x="975" y="907" width="12" height="12" fill="url(#grip)"/>
<g class="d"><text x="995" y="917">--</text><text x="1087" y="917">--</text><text x="1180" y="917">--</text></g>
<g fill="#414141" stroke="#3a3a3a">
<rect x="984.500" y="928.500" width="84" height="17" rx="2"/><rect x="1081.500" y="928.500" width="83" height="17" rx="2"/><rect x="1180.500" y="928.500" width="82" height="17" rx="2"/>
<rect x="984.500" y="948.500" width="84" height="17" rx="2"/><rect x="1081.500" y="948.500" width="83" height="17" rx="2"/><rect x="1180.500" y="948.500" width="82" height="17" rx="2"/>
<rect x="984.500" y="968.500" width="84" height="17" rx="2"/><rect x="1081.500" y="968.500" width="83" height="17" rx="2"/><rect x="1180.500" y="968.500" width="82" height="17" rx="2"/>
</g>
<g>
<text x="974" y="941">X</text><text x="1071" y="941">X</text><text x="1169" y="941">H</text>
<text x="974" y="961">Y</text><text x="1071" y="961">Y</text><text x="1169" y="961">P</text>
<text x="974" y="981">Z</text><text x="1071" y="981">Z</text><text x="1169" y="981">B</text>
</g>
<g class="d">
<text x="989" y="941">0 cm</text><text x="1086" y="941">0 cm</text><text x="1185" y="941">0 °</text>
<text x="989" y="961">0 cm</text><text x="1086" y="961">0 cm</text><text x="1185" y="961">0 °</text>
<text x="989" y="981">0 cm</text><text x="1086" y="981">0 cm</text><text x="1185" y="981">0 °</text>
</g>
<path d="M1061 936L1063.500 933L1066 936ZM1061 940H1066L1063.500 943ZM1158 936L1160.500 933L1163 936ZM1158 940H1163L1160.500 943ZM1255 936L1257.500 933L1260 936ZM1255 940H1260L1257.500 943ZM1061 956L1063.500 953L1066 956ZM1061 960H1066L1063.500 963ZM1158 956L1160.500 953L1163 956ZM1158 960H1163L1160.500 963ZM1255 956L1257.500 953L1260 956ZM1255 960H1260L1257.500 963ZM1061 976L1063.500 973L1066 976ZM1061 980H1066L1063.500 983ZM1158 976L1160.500 973L1163 976ZM1158 980H1163L1160.500 983ZM1255 976L1257.500 973L1260 976ZM1255 980H1260L1257.500 983Z" fill="#727272"/>
<rect x="984.500" y="991.500" width="83" height="16" rx="3" fill="#545454" stroke="#3a3a3a"/><text x="991" y="1004" style="fill:#7e7e7e">World</text><path d="M1055 997H1063L1059 1001Z" fill="#7e7e7e"/>
<rect x="1081.500" y="991.500" width="83" height="16" rx="3" fill="#545454" stroke="#3a3a3a"/><text x="1088" y="1004" style="fill:#7e7e7e">Scale</text><path d="M1152 997H1160L1156 1001Z" fill="#7e7e7e"/>
<rect x="1180.500" y="991.500" width="82" height="16" rx="8" fill="url(#dd)" stroke="#333"/><text x="1221" y="1004" text-anchor="middle" class="h">Apply</text>

<!-- status -->
<path d="M0 1020.500H1266V1040" fill="none" stroke="#5e5e5e"/>
<rect x="4" y="1025" width="12" height="12" fill="url(#grip)"/>
<text x="26" y="1035" textLength="693" lengthAdjust="spacingAndGlyphs">Move: Click and drag to move elements. Hold down SHIFT to quantize movement / add to the selection in point mode, CTRL to remove.</text>

<!-- right grips -->
<rect x="1266" y="50" width="3" height="20" fill="url(#grip)"/>
<!-- object manager -->
<path d="M1270.500 838V49H1898.500V838H1270" fill="none" stroke="#5c5c5c"/>
<path d="M1271 71.500H1898" stroke="#2f2f2f"/>
<rect x="1276" y="54" width="12" height="12" fill="url(#grip)"/>
<text x="1297" y="64" textLength="17" lengthAdjust="spacingAndGlyphs">File</text><text x="1329" y="64" textLength="20" lengthAdjust="spacingAndGlyphs">Edit</text><text x="1363" y="64" textLength="25" lengthAdjust="spacingAndGlyphs">View</text><text x="1403" y="64" textLength="38" lengthAdjust="spacingAndGlyphs">Objects</text><text x="1455" y="64" textLength="24" lengthAdjust="spacingAndGlyphs">Tags</text><text x="1493" y="64" textLength="56" lengthAdjust="spacingAndGlyphs">Bookmarks</text>
<g fill="none" stroke="#141414" stroke-width="1.300"><circle cx="1832" cy="56" r="4"/><path d="M1835 59L1839 65"/></g>
<path d="M1852 52L1859 59H1856V66H1848V59H1845Z" fill="none" stroke="#111" stroke-width="2"/>
<ellipse cx="1871" cy="60" rx="5.500" ry="3" fill="none" stroke="#2d2d2d"/>
<rect x="1885.500" y="53.500" width="10" height="13" fill="none" stroke="#1a1a1a"/><path d="M1885 53H1896V55H1885ZM1888 61H1893M1890.500 58.500V63.500" stroke="#1a1a1a"/>
<rect x="1271" y="73" width="627" height="20" fill="#525252"/>
<rect x="1271" y="93" width="627" height="20" fill="#4a4a4a"/>
<rect x="1271" y="113" width="627" height="20" fill="#525252"/>
<path d="M1496.500 73V838M1535.500 73V838" stroke="#333"/>
<path d="M1279.500 73V122.500H1287M1279.500 84H1289M1290.500 93V100" fill="none" stroke="#8a8a8a"/>
<rect x="1275.500" y="79.500" width="8" height="8" fill="#525252" stroke="#999"/><path d="M1277 83.500H1282" stroke="#bbb"/>
<circle cx="1296" cy="84" r="6" fill="#3fd089"/><rect x="1293" y="79" width="6" height="10" rx="2" fill="#72e9af"/><path d="M1289 78L1296 76L1303 78L1304 90L1296 92L1289 90Z" fill="none" stroke="#2c2c2c" stroke-dasharray="1 2"/>
<text x="1307" y="88" style="fill:#a4a4a4" textLength="100" lengthAdjust="spacingAndGlyphs">Subdivision Surface</text>
<rect x="1286.500" y="100.500" width="8" height="8" fill="#4a4a4a" stroke="#999"/><path d="M1288 104.500H1293M1290.500 102V107" stroke="#ccc"/>
<path d="M1302 98V109H1312" fill="none" stroke="#eee" stroke-width="1.500"/><text x="1306" y="104" style="font-size:9px;font-weight:bold;fill:#dbe6f5">0</text>
<text x="1318" y="108" textLength="171" lengthAdjust="spacingAndGlyphs" style="fill:#a4a4a4">Philips_Xenstart_D1S_Xenon_Bulb</text>
<circle cx="1296" cy="124" r="6.500" fill="url(#sky)"/><path d="M1290 124H1302M1296 118V130M1291 120H1301M1291 128H1301" stroke="#4a6a96" stroke-width=".6"/>
<text x="1307" y="128" style="fill:#a4a4a4" textLength="17" lengthAdjust="spacingAndGlyphs">Sky</text>
<rect x="1499" y="77" width="12" height="12" fill="url(#hat)"/>
<rect x="1499" y="97" width="12" height="12" rx="1" fill="#d24cf0"/>
<rect x="1499" y="117" width="12" height="12" fill="url(#hat)"/>
<g fill="#707070"><circle cx="1519" cy="79" r="2.500"/><circle cx="1519" cy="87" r="2.500"/><circle cx="1519" cy="99" r="2.500"/><circle cx="1519" cy="107" r="2.500"/><circle cx="1519" cy="127" r="2.500"/></g>
<circle cx="1519" cy="119" r="2.500" fill="#e24848"/>
<path d="M1524 84L1527 88L1532 79" fill="none" stroke="#45d67f" stroke-width="1.300"/>

<!-- layers manager -->
<path d="M1270.500 1038V844.500H1898.500V1038.500H1270" fill="none" stroke="#5c5c5c"/>
<rect x="1276" y="850" width="12" height="12" fill="url(#grip)"/>
<text x="1297" y="860" textLength="17" lengthAdjust="spacingAndGlyphs">File</text><text x="1329" y="860" textLength="20" lengthAdjust="spacingAndGlyphs">Edit</text><text x="1363" y="860" textLength="25" lengthAdjust="spacingAndGlyphs">View</text>
<path d="M1271 866.500H1898" stroke="#2f2f2f"/>
<rect x="1272" y="868" width="625" height="17" fill="#4d4d4d"/>
<path d="M1272 884.500H1897M1272 868.500H1897" stroke="#333"/>
<path d="M1495.500 868V885M1513.500 868V885M1531.500 868V885M1549.500 868V885M1567.500 868V885M1585.500 868V885M1603.500 868V885M1621.500 868V885M1639.500 868V885M1657.500 868V885M1675.500 868V885" stroke="#333"/>
<text x="1276" y="881" textLength="28" lengthAdjust="spacingAndGlyphs">Name</text>
<g text-anchor="middle"><text x="1502" y="881">S</text><text x="1521" y="881">V</text><text x="1539" y="881">R</text><text x="1558" y="881">M</text><text x="1574" y="881">L</text><text x="1593" y="881">A</text><text x="1611" y="881">G</text><text x="1629" y="881">D</text><text x="1647" y="881">E</text><text x="1665" y="881">X</text></g>
<rect x="1272" y="885" width="625" height="15" fill="#4f4f4f"/>
<path d="M1284.500 886V893.500H1293" fill="none" stroke="#8a8a8a"/>
<rect x="1296" y="888" width="10" height="10" rx="1" fill="#d24cf0"/>
<text x="1313" y="897" class="o" textLength="171" lengthAdjust="spacingAndGlyphs">Philips_Xenstart_D1S_Xenon_Bulb</text>
<circle cx="1506" cy="892" r="5" fill="#7e7e7e"/>
<rect x="1518" y="887" width="12" height="10" fill="#e8e8e8"/><ellipse cx="1524" cy="892" rx="4.500" ry="2.800" fill="#222"/>
<rect x="1536" y="890" width="12" height="9" fill="#0f0f0f"/><path d="M1536 887H1548V889.500H1536Z" fill="#222"/>
<path d="M1554 887V895H1560M1554 891H1558" fill="none" stroke="#111"/><rect x="1559" y="890" width="4" height="1.500" fill="#eee"/><rect x="1561" y="896" width="4" height="1.500" fill="#eee"/>
<rect x="1572.500" y="892.500" width="8" height="7" fill="none" stroke="#222"/><path d="M1574 892V889A2.500 2.500 0 0 1 1579 889V892" fill="none" stroke="#222"/>
<rect x="1592" y="886" width="6" height="13" fill="#111"/><path d="M1592.500 889H1597.500M1592.500 892.500H1597.500M1592.500 896H1597.500" stroke="#ccc" stroke-width="1.400"/>
<path d="M1613 885L1619 897H1607Z" fill="#cfcfcf" stroke="#222"/><path d="M1613 885V897M1609 893L1617 893" stroke="#333"/>
<path d="M1627 887L1637 885V894L1632 899L1627 895Z" fill="#aeaeae" stroke="#333"/>
<path d="M1643 888H1655Q1653 896 1649 896Q1645 896 1643 888Z" fill="#d6d6d6" stroke="#333" stroke-width=".6"/>
<path d="M1662 886H1665V888H1667V886H1670V898H1667V894H1665V898H1662Z" fill="#e8e8e8" stroke="#222" stroke-width=".6"/>

<!-- tabs -->
<rect x="1900" y="49" width="20" height="790" fill="#464646"/>
<path d="M1900 49.500H1917Q1920 50 1920 53V99H1900Z" fill="#5f5f5f" stroke="#3a3a3a"/>
<path d="M1900 100H1918V140H1900Z" fill="#3f3f3f"/>
<path d="M1900 142H1918V236H1900ZM1900 238H1918V298H1900Z" fill="#3f3f3f"/>
<text transform="translate(1906,57) rotate(90)" class="o" textLength="40" lengthAdjust="spacingAndGlyphs">Objects</text>
<text transform="translate(1906,107) rotate(90)" style="fill:#707070" textLength="30" lengthAdjust="spacingAndGlyphs">Takes</text>
<text transform="translate(1906,148) rotate(90)" style="fill:#707070" textLength="82" lengthAdjust="spacingAndGlyphs">Content Browser</text>
<text transform="translate(1906,243) rotate(90)" style="fill:#707070" textLength="48" lengthAdjust="spacingAndGlyphs">Structure</text>
<path d="M1900 846H1917V904H1900Z" fill="#3a3a3a"/>
<path d="M1900 906H1920V950H1900Z" fill="#5f5f5f" stroke="#3a3a3a"/>
<text transform="translate(1906,852) rotate(90)" style="fill:#707070" textLength="48" lengthAdjust="spacingAndGlyphs">Attributes</text>
<text transform="translate(1906,914) rotate(90)" class="o" textLength="33" lengthAdjust="spacingAndGlyphs">Layers</text>
</svg>
</body></html>
